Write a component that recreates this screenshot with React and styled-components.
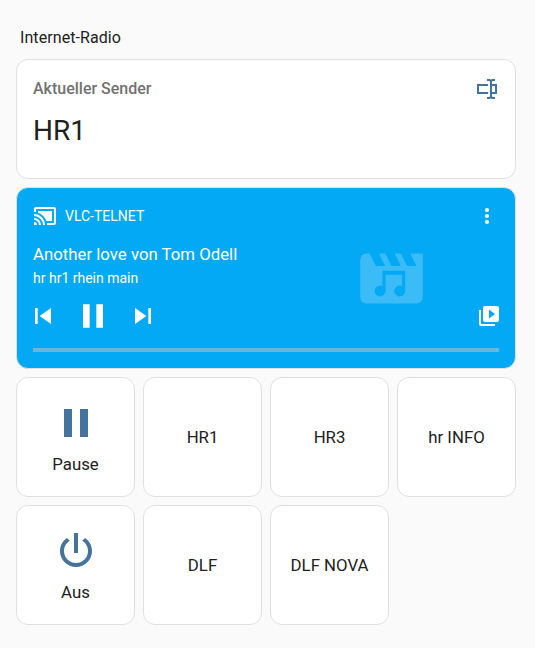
import React from "react";
import styled, { createGlobalStyle } from "styled-components";

const GlobalStyle = createGlobalStyle`
  html, body {
    margin: 0;
    padding: 0;
    background: #fafafa;
  }
  body {
    font-family: Roboto, "Liberation Sans", sans-serif;
    color: #212121;
  }
`;

const paths = {
  textbox:
    "M17,7H22V17H17V19A1,1 0 0,0 18,20H20V22H17.5C16.95,22 16,21.55 16,21C16,21.55 15.05,22 14.5,22H12V20H14A1,1 0 0,0 15,19V5A1,1 0 0,0 14,4H12V2H14.5C15.05,2 16,2.45 16,3C16,2.45 16.95,2 17.5,2H20V4H18A1,1 0 0,0 17,5V7M2,7H13V9H4V15H13V17H2V7M20,15V9H17V15H20Z",
  cast:
    "M21,3H3C1.89,3 1,3.89 1,5V8H3V5H21V19H14V21H21A2,2 0 0,0 23,19V5C23,3.89 22.1,3 21,3M1,10V12A9,9 0 0,1 10,21H12C12,14.92 7.07,10 1,10M19,7H5V8.63C8.96,9.91 12.09,13.04 13.37,17H19M1,14V16A5,5 0 0,1 6,21H8A7,7 0 0,0 1,14M1,18V21H4A3,3 0 0,0 1,18Z",
  dots:
    "M12,16A2,2 0 0,1 14,18A2,2 0 0,1 12,20A2,2 0 0,1 10,18A2,2 0 0,1 12,16M12,10A2,2 0 0,1 14,12A2,2 0 0,1 12,14A2,2 0 0,1 10,12A2,2 0 0,1 12,10M12,4A2,2 0 0,1 14,6A2,2 0 0,1 12,8A2,2 0 0,1 10,6A2,2 0 0,1 12,4Z",
  prev: "M6,18V6H8V18H6M9.5,12L18,6V18L9.5,12Z",
  next: "M16,18H18V6H16M6,18L14.5,12L6,6V18Z",
  pause: "M14,19H18V5H14M6,19H10V5H6V19Z",
  browse:
    "M4,6H2V20A2,2 0 0,0 4,22H18V20H4V6M20,2H8A2,2 0 0,0 6,4V16A2,2 0 0,0 8,18H20A2,2 0 0,0 22,16V4A2,2 0 0,0 20,2M12,14.5V5.5L18,10L12,14.5Z",
  power:
    "M16.56,5.44L15.11,6.89C16.84,7.94 18,9.83 18,12A6,6 0 0,1 12,18A6,6 0 0,1 6,12C6,9.83 7.16,7.94 8.88,6.88L7.44,5.44C5.36,6.88 4,9.28 4,12A8,8 0 0,0 12,20A8,8 0 0,0 20,12C20,9.28 18.64,6.88 16.56,5.44M13,3H11V13H13",
  movieMusic:
    "M18,4L20,8H17L15,4H13L15,8H12L10,4H8L10,8H7L5,4H4A2,2 0 0,0 2,6V18A2,2 0 0,0 4,20H20A2,2 0 0,0 22,18V4H18ZM9.1,9.5H16.4V16A1.75,1.75 0 1,1 15.4,14.4V10.8H10.1V16A1.75,1.75 0 1,1 9.1,14.4V9.5Z",
};

const Icon = ({ name, size = 24, ...rest }) => (
  <svg width={size} height={size} viewBox="0 0 24 24" fill="currentColor" fillRule="evenodd" {...rest}>
    <path d={paths[name]} />
  </svg>
);

const Page = styled.div`
  width: 500px;
  padding: 0 19px 23px 16px;
  display: flex;
  flex-direction: column;
  gap: 8px;
`;

const StackTitle = styled.div`
  padding: 29px 4px 0;
  height: 22px;
  font-size: 16px;
  line-height: 18px;
  letter-spacing: 0.08px;
`;

const Card = styled.div`
  box-sizing: border-box;
  background: #fff;
  border: 1px solid #e0e0e0;
  border-radius: 12px;
`;

const SensorCard = styled(Card)`
  height: 120px;
  padding: 16px 16px 0;
`;

const SensorHeader = styled.div`
  display: flex;
  justify-content: space-between;
  align-items: flex-start;
  height: 24px;
`;

const SensorName = styled.div`
  font-size: 16px;
  font-weight: 500;
  line-height: 26px;
  color: #727272;
`;

const SensorIcon = styled(Icon)`
  color: #44739e;
  display: block;
  margin-top: 1px;
`;

const SensorValue = styled.div`
  margin-top: 13px;
  font-size: 28px;
  line-height: 36px;
`;

const MediaCard = styled.div`
  position: relative;
  box-sizing: border-box;
  height: 182px;
  background: #03a9f4;
  border-radius: 12px;
  border: 1px solid #e0e0e0;
  color: #fff;
  padding: 16px 16px 0;
  overflow: hidden;
`;

const ArtworkIcon = styled(Icon)`
  position: absolute;
  left: 336.5px;
  top: 52.5px;
  opacity: 0.22;
`;

const MediaHeader = styled.div`
  display: flex;
  align-items: center;
  height: 24px;
`;

const MediaSource = styled.div`
  flex: 1;
  margin-left: 8px;
  font-size: 14px;
`;

const TrackTitle = styled.div`
  margin-top: 16px;
  font-size: 16.8px;
  line-height: 20px;
`;

const TrackArtist = styled.div`
  margin-top: 4px;
  font-size: 14px;
  line-height: 20px;
`;

const Controls = styled.div`
  display: flex;
  align-items: center;
  justify-content: space-between;
  height: 40px;
  margin-top: 8px;
`;

const PlayButtons = styled.div`
  display: flex;
  align-items: center;
  gap: 14px;
  margin-left: -6px;
`;

const BrowseIcon = styled(Icon)`
  margin-right: -2px;
`;

const Progress = styled.div`
  height: 4px;
  margin-top: 12px;
  background: #67b6de;
`;

const ButtonGrid = styled.div`
  display: grid;
  grid-template-columns: repeat(4, 1fr);
  grid-auto-rows: 120px;
  gap: 8px;
`;

const TileCard = styled(Card)`
  display: flex;
  flex-direction: column;
  align-items: center;
  justify-content: center;
  font-size: 16.8px;
  line-height: 20px;
`;

const TileIcon = styled(Icon)`
  color: #44739e;
  margin: -1px 0 7px;
`;

const tiles = [
  { label: "Pause", icon: "pause" },
  { label: "HR1" },
  { label: "HR3" },
  { label: "hr INFO" },
  { label: "Aus", icon: "power" },
  { label: "DLF" },
  { label: "DLF NOVA" },
];

export default function App() {
  return (
    <>
      <GlobalStyle />
      <Page>
        <StackTitle>Internet-Radio</StackTitle>
        <SensorCard>
          <SensorHeader>
            <SensorName>Aktueller Sender</SensorName>
            <SensorIcon name="textbox" />
          </SensorHeader>
          <SensorValue>HR1</SensorValue>
        </SensorCard>
        <MediaCard>
          <ArtworkIcon name="movieMusic" size={75} />
          <MediaHeader>
            <Icon name="cast" />
            <MediaSource>VLC-TELNET</MediaSource>
            <Icon name="dots" />
          </MediaHeader>
          <TrackTitle>Another love von Tom Odell</TrackTitle>
          <TrackArtist>hr hr1 rhein main</TrackArtist>
          <Controls>
            <PlayButtons>
              <Icon name="prev" size={32} />
              <Icon name="pause" size={40} />
              <Icon name="next" size={32} />
            </PlayButtons>
            <BrowseIcon name="browse" />
          </Controls>
          <Progress />
        </MediaCard>
        <ButtonGrid>
          {tiles.map((t) => (
            <TileCard key={t.label}>
              {t.icon && <TileIcon name={t.icon} size={48} />}
              <span>{t.label}</span>
            </TileCard>
          ))}
        </ButtonGrid>
      </Page>
    </>
  );
}
